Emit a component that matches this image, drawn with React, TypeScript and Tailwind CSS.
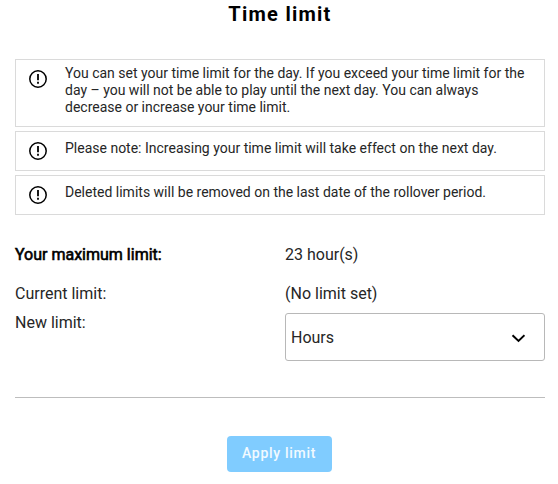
import type { ReactNode } from "react";

const notices = [
	"You can set your time limit for the day. If you exceed your time limit for the day – you will not be able to play until the next day. You can always decrease or increase your time limit.",
	"Please note: Increasing your time limit will take effect on the next day.",
	"Deleted limits will be removed on the last date of the rollover period.",
];

const AlertIcon = () => (
	<svg
		className="mt-2.5 ml-[13px] size-[18px] shrink-0"
		viewBox="0 0 18 18"
		fill="none"
		stroke="#000"
	>
		<circle cx="9" cy="9" r="8.2" strokeWidth="1.5" />
		<path d="M9 4v6.2M9 11.8v1.9" strokeWidth="1.8" />
	</svg>
);

const Notice = ({ children }: { children: ReactNode }) => (
	<div className="flex min-h-10 border border-[#dadada] pr-2.5 pb-2.5">
		<AlertIcon />
		<p className="ml-[18px] flex min-h-7 items-center pt-[5px] text-[14px] leading-[17px]">
			{children}
		</p>
	</div>
);

const App = () => {
	return (
		<main className="h-[484px] overflow-hidden bg-white pr-[13px] pl-[15px] font-['Roboto',sans-serif] text-[#262626]">
			<h1 className="pt-0.5 text-center text-[20px] leading-6 font-bold tracking-[1.25px] text-black">
				Time limit
			</h1>

			<section className="mt-[33px] flex flex-col gap-1">
				{notices.map((text) => (
					<Notice key={text}>{text}</Notice>
				))}
			</section>

			<section className="mt-[30px] text-[16px] leading-5">
				<div className="grid grid-cols-[270px_1fr]">
					<span className="text-black [-webkit-text-stroke:0.6px_#000]">
						Your maximum limit:
					</span>
					<span>23 hour(s)</span>
				</div>
				<div className="mt-[19px] grid grid-cols-[270px_1fr]">
					<span>Current limit:</span>
					<span>(No limit set)</span>
				</div>
				<div className="mt-[9px] grid grid-cols-[270px_1fr]">
					<span>New limit:</span>
					<button
						type="button"
						className="flex h-12 items-center justify-between rounded-[3px] border border-[#b8b8b8] bg-white pt-px pr-[19px] pl-[5px]"
					>
						<span>Hours</span>
						<svg
							className="size-3.5"
							viewBox="0 0 14 14"
							fill="none"
							stroke="#000"
							strokeWidth="2"
						>
							<path d="M1.5 4.2l6 5.7 6-5.7" />
						</svg>
					</button>
				</div>
			</section>

			<hr className="mt-9 border-[#bdbdbd]" />

			<div className="mt-[38px] flex justify-center pr-0.5">
				<button
					type="button"
					className="h-9 w-[105px] rounded bg-[#80ccff] pb-0.5 text-[14px] font-medium tracking-[0.7px] text-[#f2faff]"
				>
					Apply limit
				</button>
			</div>
		</main>
	);
};

export default App;
